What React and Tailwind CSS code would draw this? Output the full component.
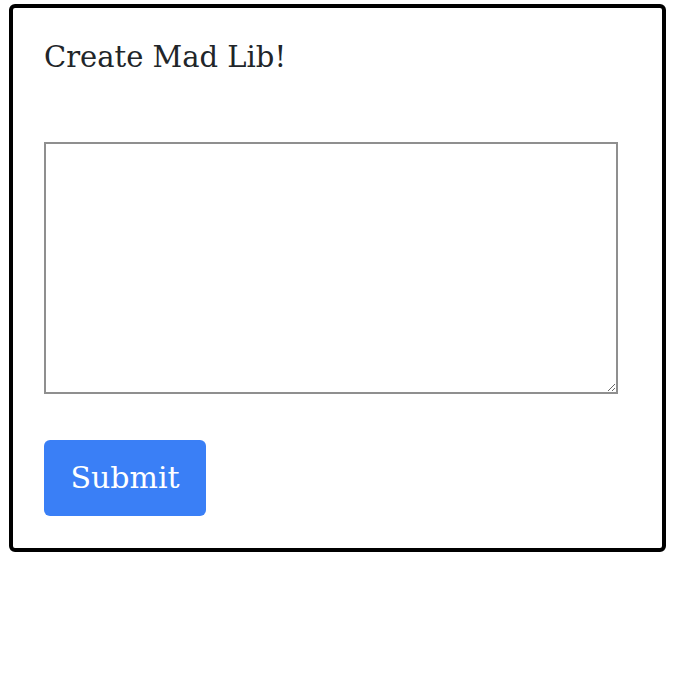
export default function App() {
  return (
    <div className="pt-[4px] pl-[9px]" style={{ fontFamily: '"DejaVu Serif", "Liberation Serif", serif' }}>
      <form className="w-[657px] h-[548px] border-4 border-black rounded-[6px] px-[31px] pt-[27px]">
        <h1 className="text-[29px] leading-[44px] text-[#212529]">Create Mad Lib!</h1>
        <textarea className="block mt-[63px] w-[574px] h-[252px] border-2 border-[#8f8f8f] resize" />
        <button
          type="button"
          className="mt-[46px] w-[162px] h-[76px] rounded-[6px] bg-[#3a7ff6] text-white text-[30px] leading-[72px]"
        >
          Submit
        </button>
      </form>
    </div>
  )
}
